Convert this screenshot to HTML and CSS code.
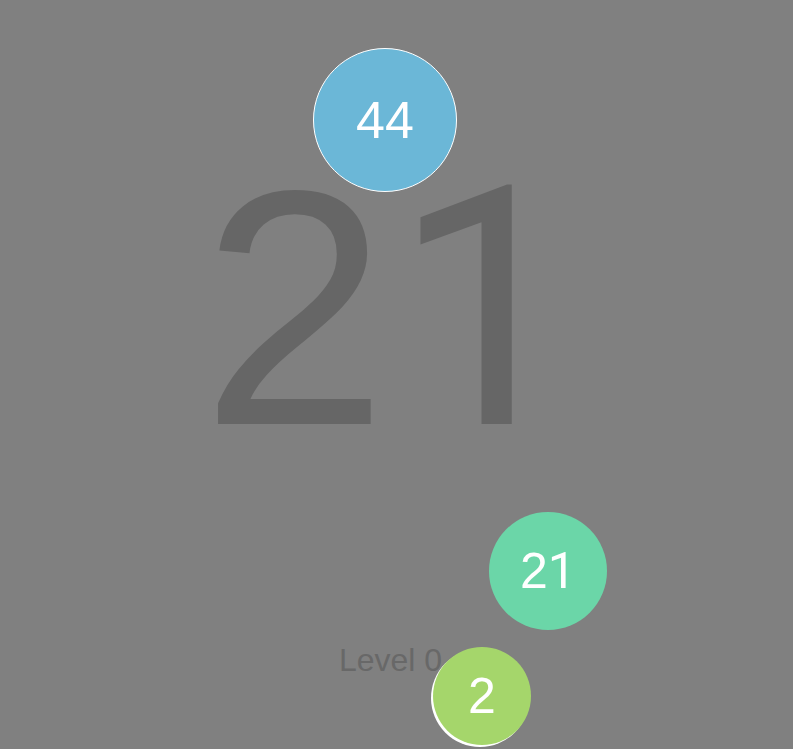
FILE: index.html
```html
<!DOCTYPE html>
<html>
<head>
<meta charset="utf-8">
<link rel="stylesheet" href="styles.css">
</head>
<body>
<main class="stage">
  <div class="count">2<span class="count-one">1</span></div>
  <div class="level">Level 0</div>
  <div class="bubble bubble-blue">44</div>
  <div class="bubble bubble-mint">2<span class="one">1</span></div>
  <div class="bubble bubble-lime">2</div>
</main>
</body>
</html>
```
FILE: styles.css
```css
html, body {
  margin: 0;
  padding: 0;
  background: #808080;
  overflow: hidden;
}
.stage {
  position: relative;
  width: 793px;
  height: 749px;
  box-sizing: border-box;
  padding: 141px 11px 0 0;
  display: flex;
  flex-direction: column;
  align-items: center;
  font-family: "Liberation Sans", sans-serif;
}
.count {
  font-size: 335px;
  line-height: 335px;
  height: 335px;
  color: #666666;
}
.count-one {
  font-family: Roboto, "Liberation Sans", sans-serif;
  margin-left: 5px;
}
.one {
  font-family: Roboto, "Liberation Sans", sans-serif;
}
.level {
  margin-top: 168px;
  margin-right: 1px;
  font-size: 32px;
  line-height: 32px;
  color: #686868;
}
.bubble {
  position: absolute;
  box-sizing: border-box;
  border-radius: 50%;
  display: flex;
  align-items: center;
  justify-content: center;
  color: #ffffff;
  line-height: 1;
}
.bubble-blue {
  left: 313px;
  top: 48px;
  width: 144px;
  height: 144px;
  border: 1px solid #ffffff;
  background: #6bb7d7;
  font-size: 52px;
}
.bubble-mint {
  left: 489px;
  top: 512px;
  width: 118px;
  height: 118px;
  background: #6bd6a8;
  font-size: 50px;
}
.bubble-lime {
  left: 433px;
  top: 647px;
  width: 98px;
  height: 98px;
  background: #a5d66b;
  box-shadow: -2px 2px 0 #ffffff;
  font-size: 50px;
}
```
